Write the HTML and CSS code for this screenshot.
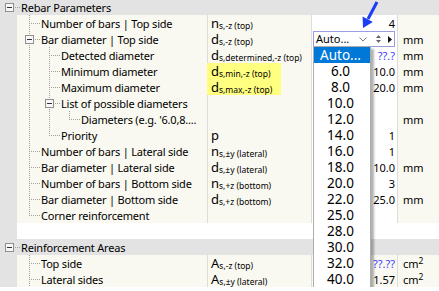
FILE: index.html
```html
<!DOCTYPE html>
<html lang="en">

<head>
  <title>Rebar Parameters</title>
  <meta charset="utf-8">
  <meta name="viewport" content="width=device-width, initial-scale=1">
  <link rel="stylesheet" href="styles.css">
</head>

<body>
  <div class="page">
    <div class="tree">
      <div class="row head first">
        <div class="label"><span class="g node"><span class="box"></span></span><span class="text">Rebar Parameters</span></div>
      </div>

      <div class="row">
        <div class="label"><span class="g"></span><span class="g tee"></span><span class="text">Number of bars | Top side</span></div>
        <div class="sym">n<sub>s,-z (top)</sub></div>
        <div class="val">4</div>
        <div class="unit"></div>
      </div>

      <div class="row">
        <div class="label"><span class="g"></span><span class="g node pipe"><span class="box"></span></span><span class="text">Bar diameter | Top side</span></div>
        <div class="sym">d<sub>s,-z (top)</sub></div>
        <div class="val edit">
          <div class="combo">
            <span class="combo-text">Auto...</span>
            <svg class="combo-icons" width="38" height="14" viewBox="0 0 38 14">
              <polyline points="3.5,5.5 7,9 10.5,5.5" fill="none" stroke="#777" stroke-width="1" />
              <polygon points="20,6 22.5,3 25,6" fill="#666" />
              <polygon points="20,8 22.5,11 25,8" fill="#666" />
              <polygon points="32,4 36,7.5 32,11" fill="#111" />
            </svg>
            <ul class="list">
              <li class="sel">Auto...</li>
              <li>6.0</li>
              <li>8.0</li>
              <li>10.0</li>
              <li>12.0</li>
              <li>14.0</li>
              <li>16.0</li>
              <li>18.0</li>
              <li>20.0</li>
              <li>22.0</li>
              <li>25.0</li>
              <li>28.0</li>
              <li>30.0</li>
              <li>32.0</li>
              <li>40.0</li>
            </ul>
          </div>
        </div>
        <div class="unit">mm</div>
      </div>

      <div class="row">
        <div class="label"><span class="g"></span><span class="g pipe"></span><span class="g tee"></span><span class="text">Detected diameter</span></div>
        <div class="sym">d<sub>s,determined,-z (top)</sub></div>
        <div class="val unknown">??.?</div>
        <div class="unit">mm</div>
      </div>

      <div class="row">
        <div class="label"><span class="g"></span><span class="g pipe"></span><span class="g tee"></span><span class="text">Minimum diameter</span></div>
        <div class="sym mark">d<sub>s,min,-z (top)</sub></div>
        <div class="val">10.0</div>
        <div class="unit">mm</div>
      </div>

      <div class="row">
        <div class="label"><span class="g"></span><span class="g pipe"></span><span class="g tee"></span><span class="text">Maximum diameter</span></div>
        <div class="sym mark">d<sub>s,max,-z (top)</sub></div>
        <div class="val">20.0</div>
        <div class="unit">mm</div>
      </div>

      <div class="row">
        <div class="label"><span class="g"></span><span class="g pipe"></span><span class="g node pipe"><span class="box"></span></span><span class="text">List of possible diameters</span></div>
        <div class="sym"></div>
        <div class="val"></div>
        <div class="unit"></div>
      </div>

      <div class="row">
        <div class="label"><span class="g"></span><span class="g pipe"></span><span class="g pipe"></span><span class="g ell"></span><span class="text">Diameters (e.g. '6.0,8....</span></div>
        <div class="sym"></div>
        <div class="val"></div>
        <div class="unit">mm</div>
      </div>

      <div class="row">
        <div class="label"><span class="g"></span><span class="g pipe"></span><span class="g ell"></span><span class="text">Priority</span></div>
        <div class="sym">p</div>
        <div class="val">1</div>
        <div class="unit"></div>
      </div>

      <div class="row">
        <div class="label"><span class="g"></span><span class="g tee"></span><span class="text">Number of bars | Lateral side</span></div>
        <div class="sym">n<sub>s,±y (lateral)</sub></div>
        <div class="val">1</div>
        <div class="unit"></div>
      </div>

      <div class="row">
        <div class="label"><span class="g"></span><span class="g tee"></span><span class="text">Bar diameter | Lateral side</span></div>
        <div class="sym">d<sub>s,±y (lateral)</sub></div>
        <div class="val">10.0</div>
        <div class="unit">mm</div>
      </div>

      <div class="row">
        <div class="label"><span class="g"></span><span class="g tee"></span><span class="text">Number of bars | Bottom side</span></div>
        <div class="sym">n<sub>s,+z (bottom)</sub></div>
        <div class="val">3</div>
        <div class="unit"></div>
      </div>

      <div class="row">
        <div class="label"><span class="g"></span><span class="g tee"></span><span class="text">Bar diameter | Bottom side</span></div>
        <div class="sym">d<sub>s,+z (bottom)</sub></div>
        <div class="val">25.0</div>
        <div class="unit">mm</div>
      </div>

      <div class="row">
        <div class="label"><span class="g"></span><span class="g ell"></span><span class="text">Corner reinforcement</span></div>
        <div class="sym"></div>
        <div class="val"></div>
        <div class="unit"></div>
      </div>

      <div class="row blank">
        <div class="label"></div>
      </div>

      <div class="row head">
        <div class="label"><span class="g node"><span class="box"></span></span><span class="text">Reinforcement Areas</span></div>
      </div>

      <div class="row">
        <div class="label"><span class="g"></span><span class="g tee"></span><span class="text">Top side</span></div>
        <div class="sym">A<sub>s,-z (top)</sub></div>
        <div class="val calc unknown">??.??</div>
        <div class="unit">cm<sup>2</sup></div>
      </div>

      <div class="row">
        <div class="label"><span class="g"></span><span class="g tee"></span><span class="text">Lateral sides</span></div>
        <div class="sym">A<sub>s,±y (lateral)</sub></div>
        <div class="val calc">1.57</div>
        <div class="unit">cm<sup>2</sup></div>
      </div>
    </div>

    <!-- annotation arrow pointing at the combo chevron -->
    <svg class="pointer" width="30" height="32" viewBox="355 0 30 32">
      <line x1="377" y1="2" x2="368" y2="19" stroke="#1a3ef5" stroke-width="3" />
      <polygon points="363,28 362.6,16.4 372.8,21.9" fill="#1a3ef5" />
    </svg>
  </div>
</body>

</html>
```

FILE: styles.css
```css
body {
  margin: 0;
  background: #fff;
  color: #000;
  font: 11px "Noto Sans", sans-serif;
  letter-spacing: -0.2px;
  overflow: hidden;
}

.page {
  position: relative;
}

.row {
  display: flex;
  height: 16px;
  line-height: 15px;
  background: #f9f9f1;
  white-space: nowrap;
}

.row.first {
  height: 15px;
}

.row.head {
  background: #e3e3e3;
}

.row.blank {
  background: #fff;
}

.label {
  display: flex;
  flex: none;
  width: 207px;
  overflow: hidden;
  background: linear-gradient(to right, #e3e3e3 17px, transparent 17px);
}

.first .label {
  align-items: flex-end;
}

.head .label {
  background: none;
}

.text {
  padding: 1px 0 0 1px;
}

/* tree guides, one 20px column per level */
.g {
  flex: none;
  width: 20px;
  height: 16px;
}

.pipe {
  background: repeating-linear-gradient(#a0a0a0 0 1px, transparent 1px 2px) 9px 0 / 1px 16px no-repeat;
}

.tee {
  background:
    repeating-linear-gradient(#a0a0a0 0 1px, transparent 1px 2px) 9px 0 / 1px 16px no-repeat,
    repeating-linear-gradient(to right, #a0a0a0 0 1px, transparent 1px 2px) 11px 8px / 10px 1px no-repeat;
}

.ell {
  background:
    repeating-linear-gradient(#a0a0a0 0 1px, transparent 1px 2px) 9px 0 / 1px 9px no-repeat,
    repeating-linear-gradient(to right, #a0a0a0 0 1px, transparent 1px 2px) 11px 8px / 10px 1px no-repeat;
}

.node {
  background: repeating-linear-gradient(to right, #a0a0a0 0 1px, transparent 1px 2px) 15px 8px / 6px 1px no-repeat;
}

.node.pipe {
  background:
    repeating-linear-gradient(#a0a0a0 0 1px, transparent 1px 2px) 9px 0 / 1px 16px no-repeat,
    repeating-linear-gradient(to right, #a0a0a0 0 1px, transparent 1px 2px) 15px 8px / 6px 1px no-repeat;
}

.box {
  display: block;
  width: 9px;
  height: 9px;
  margin: 4px 0 0 5px;
  box-sizing: border-box;
  border: 1px solid #8f8f8f;
  background: linear-gradient(#333, #333) center / 5px 1px no-repeat, #f7f7f7;
}

.sym,
.val,
.unit {
  box-sizing: border-box;
  padding-top: 1px;
  border-left: 1px solid #dcdcdc;
}

.sym {
  flex: none;
  width: 104px;
  padding-left: 3px;
  font-size: 13px;
  letter-spacing: 0;
  overflow: hidden;
}

.sym sub {
  font-size: 8.5px;
  line-height: 1;
  vertical-align: -1px;
}

.sym.mark {
  border-left-color: #ffff80;
  background: linear-gradient(to right, #ffff80 73px, transparent 73px);
}

.val {
  flex: none;
  width: 86px;
  padding-right: 2px;
  background: #fff;
  text-align: right;
  letter-spacing: 0;
}

.val.edit {
  padding-top: 0;
}

.val.calc {
  background: none;
}

.unknown {
  color: #3c3cff;
}

.unit {
  flex: 1;
  padding-left: 5px;
  letter-spacing: 0;
}

.unit sup {
  font-size: 8.5px;
  line-height: 1;
  vertical-align: 4px;
}

/* combo box with its open drop-down */
.combo {
  position: relative;
  display: flex;
  align-items: center;
  height: 16px;
  margin-left: 1px;
  box-sizing: border-box;
  border: 1px solid #9c9ce0;
  background: #fff;
  text-align: left;
}

.combo-text {
  padding-left: 2px;
  line-height: 14px;
}

.combo-icons {
  margin-left: auto;
}

.list {
  position: absolute;
  top: 100%;
  left: -1px;
  z-index: 2;
  width: 53px;
  margin: 0;
  padding: 0 3px 0 0;
  list-style: none;
  border: 1px solid #adadad;
  background: #fff;
  box-shadow: 3px 3px 2px rgba(0, 0, 0, 0.3);
  font-size: 13.5px;
  text-align: center;
}

.list li {
  height: 16px;
  line-height: 16px;
}

.list .sel {
  margin-right: -3px;
  padding-right: 3px;
  background: #0078d7;
  color: #fff;
}

.pointer {
  position: absolute;
  left: 355px;
  top: 0;
  z-index: 3;
}
```
